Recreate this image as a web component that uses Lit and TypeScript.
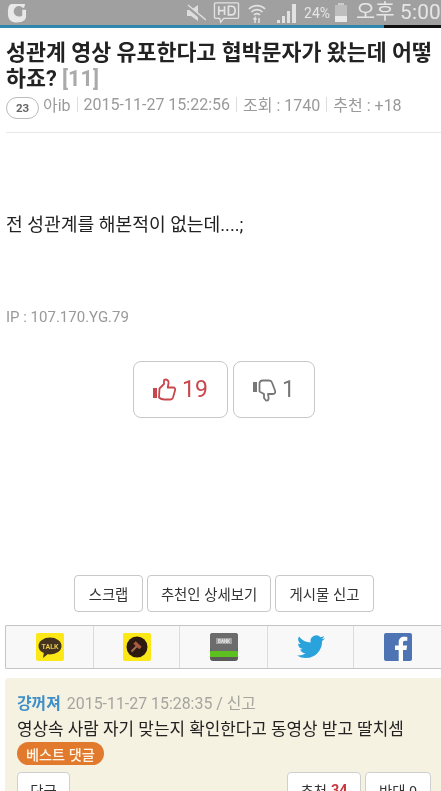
import { LitElement, html, css } from "lit";
import { customElement } from "lit/decorators.js";

@customElement("app-root")
export class AppRoot extends LitElement {
  static styles = css`
    :host { display: block; width: 441px; height: 791px; overflow: hidden; background: #fff; font-family: Roboto, "Noto Sans CJK KR", sans-serif; color: #222; filter: blur(0.35px); }
    * { box-sizing: border-box; }
    .status { height: 25px; background: #a0a0a0; display: flex; align-items: center; color: #e6e6e6; padding: 0 0 0 7px; }
    .status .logo { width: 20px; height: 20px; }
    .status .right { margin-left: auto; display: flex; align-items: center; white-space: nowrap; }
    .status svg { display: block; }
    .pct { font-size: 14px; margin-left: 7px; }
    .clock { font-size: 20.8px; margin-left: 8px; letter-spacing: .2px; line-height: 25px; }
    .progress { height: 3px; background: #111; }
    .progress div { width: 384px; height: 3px; background: #2f87ad; }
    .post { padding: 12px 6px 0; }
    h1 { margin: 0; font-size: 21.7px; line-height: 26px; font-weight: 700; color: #222; letter-spacing: 0; white-space: nowrap; }
    h1 span { color: #aaa; }
    .meta { display: flex; align-items: center; margin-top: 0; font-size: 16px; color: #9a9a9a; height: 24px; white-space: nowrap; }
    .badge { width: 33px; height: 22px; border: 1px solid #bbb; border-radius: 11px; font-size: 11.5px; font-weight: 700; color: #666; display: flex; align-items: center; justify-content: center; margin-right: 4px; margin-top: 8px; }
    .sep { width: 1px; height: 15px; background: #ddd; margin: 0 6px; }
    hr { border: 0; border-top: 1px solid #e8e8e8; margin: 16px 0 0 6px; }
    .content { padding: 0 6px; }
    .body { margin: 80px 0 0; font-size: 18.2px; line-height: 24px; color: #222; }
    .ip { margin-top: 70px; font-size: 15px; line-height: 20px; color: #999; }
    .votes { display: flex; justify-content: center; gap: 5px; margin-top: 34px; padding-left: 7px; }
    .vote { height: 57px; border: 1px solid #c8c8c8; border-radius: 8px; display: flex; align-items: center; justify-content: center; gap: 5px; font-size: 23px; }
    .vote.up { width: 95px; color: #c9474c; }
    .vote.down { width: 82px; color: #777; }
    .actions { display: flex; justify-content: center; gap: 4px; margin-top: 157px; padding-left: 7px; }
    .btn { height: 37px; border: 1px solid #c8c8c8; border-radius: 4px; display: flex; align-items: center; justify-content: center; font-size: 14.4px; color: #333; background: #fff; }
    .share { display: flex; height: 44px; margin: 13px 0 0 5px; border: 1px solid #c4c4c4; border-right: 0; border-radius: 2px 0 0 2px; background: #f8f8f8; }
    .share div { display: flex; align-items: center; justify-content: center; border-right: 1px solid #dcdcdc; height: 100%; }
    .share div:last-child { border-right: 0; }
    .comment { margin: 9px 0 0 5px; height: 200px; background: #f5f2e2; border-radius: 4px 0 0 0; padding: 15px 10px 0 12px; }
    .who { display: flex; align-items: baseline; gap: 6px; font-size: 15.9px; line-height: 22px; color: #a5a5a0; white-space: nowrap; }
    .who b { color: #3f8fc9; font-weight: 700; }
    .text { font-size: 16.9px; line-height: 22px; color: #222; margin-top: 3px; white-space: nowrap; }
    .best { display: inline-flex; align-items: center; height: 23px; padding: 0 9px; margin-top: 2px; background: #e17a2c; color: #fff5e6; font-size: 14.2px; font-weight: 500; border-radius: 12px; }
    .cbtns { display: flex; gap: 4px; margin-top: 7px; }
    .cbtn { height: 36px; border: 1px solid #cfcfcf; border-radius: 4px; background: #fff; display: flex; align-items: center; justify-content: center; font-size: 14.4px; color: #333; }
    .cbtn em { font-style: normal; font-weight: 700; color: #c9373c; margin-left: 4px; }
    .cbtn.reply { width: 53px; margin-right: auto; }
    .cbtn.like { width: 74px; }
    .cbtn.hate { width: 66px; }
  `;

  render() {
    return html`
      <div class="status">
        <svg class="logo" viewBox="0 0 21 21"><path d="M5 1h14l-1 4h-1.500A5.500 5.500 0 1 0 16 13V7h4v7c0 4-3.500 6.500-9.500 6.500S1 18 1 11c0-6 1-10 4-10z" fill="#e8e8e8"/></svg>
        <div class="right">
          <svg width="20" height="18" viewBox="0 0 20 18" fill="#ddd"><path d="M1 6h4l7-5v16l-7-5H1z"/><path d="M1 2l18 15" stroke="#a0a0a0" stroke-width="3"/><path d="M2 1l18 15" stroke="#ddd" stroke-width="1.500"/></svg>
          <svg style="margin-left:7px" width="27" height="24" viewBox="0 0 28 24" fill="none" stroke="#e2e2e2" stroke-width="1.400"><path d="M2.500 1.500h23a1 1 0 0 1 1 1v14a1 1 0 0 1-1 1H11l-3 4-1-4H2.500a1 1 0 0 1-1-1v-14a1 1 0 0 1 1-1z"/><path d="M6 5v9M12 5v9M6 9.500h6M16 5v9h3c3 0 4-2 4-4.500S22 5 19 5z" stroke-width="1.800"/></svg>
          <svg style="margin-left:8px" width="18" height="22" viewBox="0 0 18 22" fill="none" stroke="#e2e2e2" stroke-width="1.800"><path d="M1 7a11 11 0 0 1 16 0M3.500 10a7.500 7.500 0 0 1 11 0M6 13a4 4 0 0 1 6 0"/><path d="M7 21v-5l-1.500 1.500M7 16l1.500 1.500M11 16v5" stroke-width="1.600"/></svg>
          <svg style="margin-left:11px" width="20" height="20" viewBox="0 0 20 20" fill="#e2e2e2"><rect x="0" y="17" width="3" height="3"/><rect x="5" y="13" width="3" height="7"/><rect x="10" y="8" width="3" height="12"/><rect x="15" y="1" width="4" height="19"/></svg>
          <span class="pct">24%</span>
          <svg style="margin-left:4px" width="14" height="20" viewBox="0 0 14 20"><rect x="4" y="0" width="6" height="2" fill="#ccc"/><rect x="1" y="2" width="12" height="17" fill="#bdbdbd"/><rect x="1" y="13" width="12" height="6" fill="#e8e8e8"/></svg>
          <span class="clock">오후 5:00</span>
        </div>
      </div>
      <div class="progress"><div></div></div>
      <div class="post">
        <h1>성관계 영상 유포한다고 협박문자가 왔는데 어떻<br />하죠? <span>[11]</span></h1>
        <div class="meta">
          <span class="badge">23</span><span>아ib</span><i class="sep"></i><span>2015-11-27 15:22:56</span><i class="sep"></i><span>조회 : 1740</span><i class="sep"></i><span>추천 : +18</span>
        </div>
      </div>
      <hr />
      <div class="content">
        <p class="body">전 성관계를 해본적이 없는데....;</p>
        <div class="ip">IP : 107.170.YG.79</div>
      </div>
      <div class="votes">
        <div class="vote up">
          <svg width="24" height="24" viewBox="0 0 24 24"><rect x="0" y="10" width="4" height="10" fill="#c9474c"/><path d="M6.500 10.500 11 6V2c3-1.500 5 1 4.500 3.500l-.8 4h5.300c2 0 2.500 1.500 2 3l-2 7c-.4 1.200-1.200 2-2.500 2h-6c-2.500 0-4-.5-5.500-2z" fill="none" stroke="#c9474c" stroke-width="1.800" stroke-linejoin="round"/></svg>
          <span>19</span>
        </div>
        <div class="vote down">
          <svg width="24" height="24" viewBox="0 0 24 24"><rect x="0" y="4" width="4" height="10" fill="#777"/><path d="M6.500 5v8.500L11 16v4l2 2.500c2 .5 3-1 2.500-3.500l-.5-3h5c1.800 0 2.800-1.500 2-3.500l-3-8C18.500 3 17.500 2.500 16 2.500H9.500C8 2.500 7 3.500 6.500 5z" fill="none" stroke="#777" stroke-width="1.800" stroke-linejoin="round"/></svg>
          <span>1</span>
        </div>
      </div>
      <div class="actions">
        <div class="btn" style="width:69px">스크랩</div>
        <div class="btn" style="width:124px">추천인 상세보기</div>
        <div class="btn" style="width:99px">게시물 신고</div>
      </div>
      <div class="share">
        <div style="width:88px">
          <svg width="28" height="28" viewBox="0 0 28 28"><rect width="28" height="28" rx="2" fill="#fbe816"/><ellipse cx="14" cy="13" rx="11.500" ry="8.500" fill="#43321f"/><path d="M8 19l-1 6 6-5z" fill="#43321f"/><text x="14" y="15.500" font-size="7" font-weight="700" fill="#e3c94a" text-anchor="middle" font-family="Roboto, sans-serif">TALK</text></svg>
        </div>
        <div style="width:86px">
          <svg width="28" height="28" viewBox="0 0 28 28"><rect width="28" height="28" rx="2" fill="#fbe816"/><circle cx="14" cy="14" r="10.500" fill="#2c1a10"/><path d="M8.500 18.500l5.500-5.500" stroke="#a86a50" stroke-width="2"/><path d="M11.500 9.500l6 5.500" stroke="#a85a40" stroke-width="3.500"/></svg>
        </div>
        <div style="width:88px">
          <svg width="28" height="28" viewBox="0 0 28 28"><rect width="28" height="28" rx="3" fill="#5a5a5a"/><rect width="28" height="18" rx="3" fill="#6c6c6c"/><rect x="6" y="5" width="16" height="6" fill="#a0a0a0"/><text x="14" y="10" font-size="4.500" font-weight="700" fill="#e8e8e8" text-anchor="middle" font-family="Roboto, sans-serif">BANK</text><rect y="18" width="28" height="6" fill="#5cc01e"/></svg>
        </div>
        <div style="width:86px">
          <svg width="28" height="26" viewBox="0 0 24 20"><path d="M24 2.400a9.800 9.800 0 0 1-2.800.8A5 5 0 0 0 23.300.500a9.800 9.800 0 0 1-3.100 1.200 4.900 4.900 0 0 0-8.400 4.500A14 14 0 0 1 1.700.900a4.900 4.900 0 0 0 1.500 6.600 4.900 4.900 0 0 1-2.200-.6 4.900 4.900 0 0 0 3.900 4.900 4.900 4.900 0 0 1-2.200.1 4.900 4.900 0 0 0 4.600 3.400A9.900 9.900 0 0 1 0 17.300 14 14 0 0 0 7.500 19.500c9 0 14-7.500 14-14v-.6A10 10 0 0 0 24 2.400z" fill="#2aa3dc"/></svg>
        </div>
        <div style="width:87px">
          <svg width="28" height="28" viewBox="0 0 28 28"><rect width="28" height="28" rx="2" fill="#4f74b3"/><path d="M19 28V17h3.500l.6-4.500H19V10c0-1.300.4-2.200 2.200-2.200H23.300V4c-.4 0-1.700-.2-3.200-.2-3.200 0-5.400 2-5.400 5.500v3.200H11V17h3.700v11z" fill="#fff"/></svg>
        </div>
      </div>
      <div class="comment">
        <div class="who"><b>걍꺼져</b><span>2015-11-27 15:28:35 / 신고</span></div>
        <div class="text">영상속 사람 자기 맞는지 확인한다고 동영상 받고 딸치셈</div>
        <div class="best">베스트 댓글</div>
        <div class="cbtns">
          <div class="cbtn reply">답글</div>
          <div class="cbtn like">추천<em>34</em></div>
          <div class="cbtn hate">반대 0</div>
        </div>
      </div>
    `;
  }
}
